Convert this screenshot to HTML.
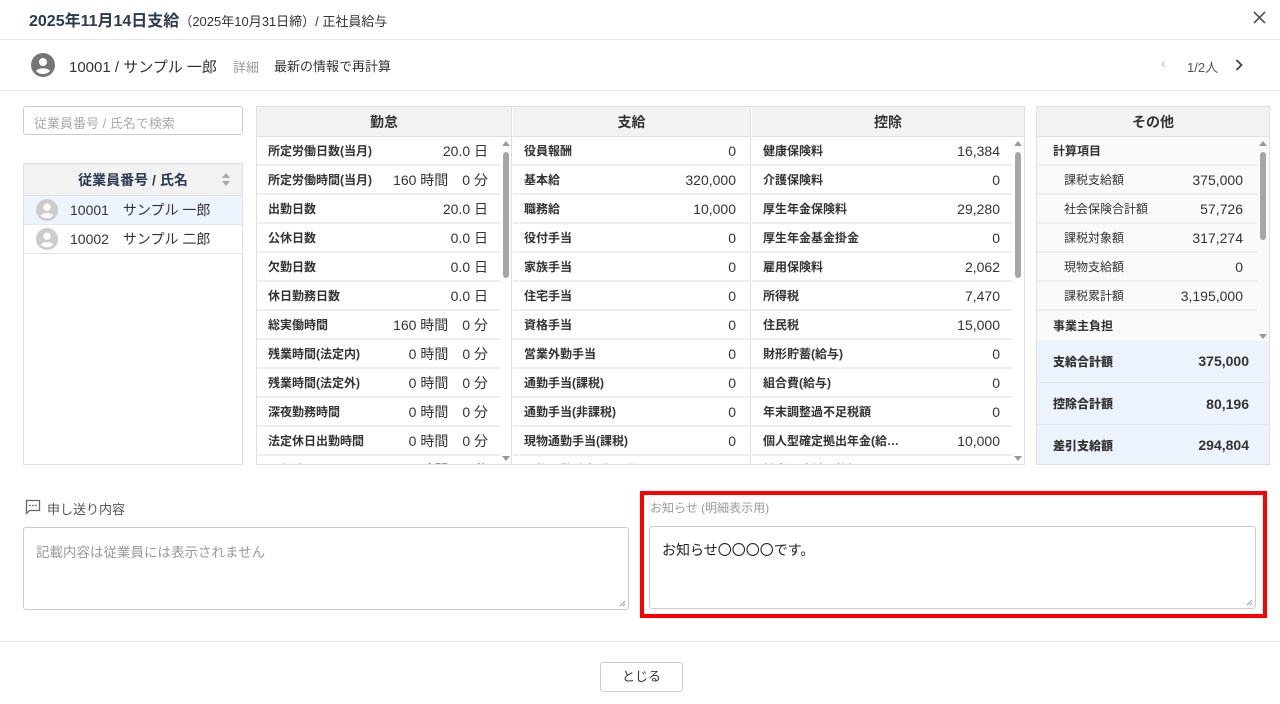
<!DOCTYPE html>
<html><head><meta charset="utf-8"><style>
*{box-sizing:border-box;margin:0;padding:0}
body{width:1280px;height:704px;overflow:hidden;background:#fff;font-family:"Liberation Sans","Noto Sans CJK JP",sans-serif;color:#333;position:relative}
.a{position:absolute}
.hl{position:absolute;left:0;width:1280px;height:1px;background:#e6e6e6}
.col{position:absolute;overflow:hidden}
.hd{height:30px;background:#f2f2f2;border-bottom:1px solid #e0e0e0;text-align:center;font-size:14px;font-weight:bold;line-height:30px;color:#333}
.r{height:29px;border-bottom:2px solid #eeeeee;display:flex;align-items:center;justify-content:space-between;padding:0 12px 0 11px;font-size:12px}
.r b{font-weight:bold;color:#333;white-space:nowrap}
.r span{font-size:14px;color:#333;white-space:nowrap}
.sb{position:absolute;width:12px;background:#fff}
.sb .t{position:absolute;left:3px;width:6px;background:#a6a6a6;border-radius:3px}
.up,.dn{position:absolute;left:2px;width:0;height:0;border-left:4px solid transparent;border-right:4px solid transparent}
.up{border-bottom:5px solid #999}.dn{border-top:5px solid #999}
.o .r{background:#fafafa}
.sum{height:43px;background:#edf3fc;border-bottom:1px solid #dde6f2;display:flex;align-items:center;justify-content:space-between;padding:0 20px 0 16px;font-size:12px;font-weight:bold}
.sum span{font-size:14px}
.grip{position:absolute;right:2px;bottom:2px}
</style></head><body>
<div class="a" style="left:29px;top:7px;font-size:16px;font-weight:bold;color:#2b3a4f">2025年11月14日支給<span style="font-size:13px;font-weight:normal;color:#333">（2025年10月31日締）/ 正社員給与</span></div>
<svg class="a" style="left:1253px;top:11px" width="13" height="13" viewBox="0 0 13 13"><path d="M1 1L12 12M12 1L1 12" stroke="#555" stroke-width="1.6"/></svg>
<div class="hl" style="top:39px"></div>
<svg class="a" style="left:31px;top:53px" width="24" height="24" viewBox="0 0 24 24"><circle cx="12" cy="12" r="12" fill="#757575"/><circle cx="12" cy="9" r="4" fill="#fff"/><path d="M5 18c2-3.5 12-3.5 14 0c-2 2-4 3-7 3s-5-1-7-3z" fill="#fff"/></svg>
<div class="a" style="left:69px;top:56px;font-size:15px;color:#333">10001 / サンプル 一郎</div>
<div class="a" style="left:233px;top:57px;font-size:13px;color:#999">詳細</div>
<div class="a" style="left:274px;top:56px;font-size:13px;color:#333">最新の情報で再計算</div>
<div class="a" style="left:1161px;top:55px;font-size:14px;color:#bbb">‹</div>
<div class="a" style="left:1187px;top:57px;font-size:13px;color:#555">1/2人</div>
<svg class="a" style="left:1235px;top:59px" width="8" height="12" viewBox="0 0 8 12"><path d="M1.5 1l5 5-5 5" stroke="#444" stroke-width="1.8" fill="none"/></svg>
<div class="hl" style="top:90px"></div>

<div class="a" style="left:23px;top:106px;width:220px;height:29px;border:1px solid #ccc;border-radius:3px;font-size:13px;color:#aaa;padding:6px 10px">従業員番号 / 氏名で検索</div>
<div class="a" style="left:23px;top:163px;width:220px;height:302px;border:1px solid #e0e0e0">
 <div style="height:32px;background:#f2f2f2;border-bottom:1px solid #e0e0e0;text-align:center;line-height:32px;font-size:14px;font-weight:bold;color:#2b3a4f;position:relative">従業員番号 / 氏名<div class="up" style="left:198px;top:9px;border-bottom-color:#aaa"></div><div class="dn" style="left:198px;top:17px;border-top-color:#aaa"></div></div>
 <div style="height:29px;background:#edf4fd;border-bottom:1px solid #e5e5e5;display:flex;align-items:center;font-size:14px"><svg style="margin:0 12px 0 12px" width="22" height="22" viewBox="0 0 24 24"><circle cx="12" cy="12" r="12" fill="#ccc"/><circle cx="12" cy="9" r="4" fill="#fff"/><path d="M5 18c2-3.5 12-3.5 14 0c-2 2-4 3-7 3s-5-1-7-3z" fill="#fff"/></svg>10001　サンプル 一郎</div>
 <div style="height:29px;border-bottom:1px solid #e5e5e5;display:flex;align-items:center;font-size:14px"><svg style="margin:0 12px 0 12px" width="22" height="22" viewBox="0 0 24 24"><circle cx="12" cy="12" r="12" fill="#ccc"/><circle cx="12" cy="9" r="4" fill="#fff"/><path d="M5 18c2-3.5 12-3.5 14 0c-2 2-4 3-7 3s-5-1-7-3z" fill="#fff"/></svg>10002　サンプル 二郎</div>
</div>

<div class="a" style="left:256px;top:106px;width:769px;height:359px;border:1px solid #e0e0e0"></div>
<div class="col" style="left:257px;top:107px;width:255px;height:357px;border-right:1px solid #e0e0e0">
 <div class="hd">勤怠</div>
 <div style="width:243px">
 <div class="r"><b>所定労働日数(当月)</b><span>20.0 日</span></div>
 <div class="r"><b>所定労働時間(当月)</b><span>160 時間　0 分</span></div>
 <div class="r"><b>出勤日数</b><span>20.0 日</span></div>
 <div class="r"><b>公休日数</b><span>0.0 日</span></div>
 <div class="r"><b>欠勤日数</b><span>0.0 日</span></div>
 <div class="r"><b>休日勤務日数</b><span>0.0 日</span></div>
 <div class="r"><b>総実働時間</b><span>160 時間　0 分</span></div>
 <div class="r"><b>残業時間(法定内)</b><span>0 時間　0 分</span></div>
 <div class="r"><b>残業時間(法定外)</b><span>0 時間　0 分</span></div>
 <div class="r"><b>深夜勤務時間</b><span>0 時間　0 分</span></div>
 <div class="r"><b>法定休日出勤時間</b><span>0 時間　0 分</span></div>
 <div class="r"><b>遅刻時間</b><span>0 時間　0 分</span></div>
 </div>
 <div class="sb" style="left:243px;top:31px;height:326px"><div class="up" style="top:3px"></div><div class="t" style="top:14px;height:126px"></div><div class="dn" style="top:318px"></div></div>
</div>
<div class="col" style="left:513px;top:107px;width:238px;height:357px;border-right:1px solid #e0e0e0">
 <div class="hd">支給</div>
 <div class="r" style="padding-right:14px"><b>役員報酬</b><span>0</span></div>
 <div class="r" style="padding-right:14px"><b>基本給</b><span>320,000</span></div>
 <div class="r" style="padding-right:14px"><b>職務給</b><span>10,000</span></div>
 <div class="r" style="padding-right:14px"><b>役付手当</b><span>0</span></div>
 <div class="r" style="padding-right:14px"><b>家族手当</b><span>0</span></div>
 <div class="r" style="padding-right:14px"><b>住宅手当</b><span>0</span></div>
 <div class="r" style="padding-right:14px"><b>資格手当</b><span>0</span></div>
 <div class="r" style="padding-right:14px"><b>営業外勤手当</b><span>0</span></div>
 <div class="r" style="padding-right:14px"><b>通勤手当(課税)</b><span>0</span></div>
 <div class="r" style="padding-right:14px"><b>通勤手当(非課税)</b><span>0</span></div>
 <div class="r" style="padding-right:14px"><b>現物通勤手当(課税)</b><span>0</span></div>
 <div class="r" style="padding-right:14px"><b>現物通勤手当(非課税)</b><span>0</span></div>
</div>
<div class="col" style="left:752px;top:107px;width:272px;height:357px">
 <div class="hd">控除</div>
 <div style="width:260px">
 <div class="r"><b>健康保険料</b><span>16,384</span></div>
 <div class="r"><b>介護保険料</b><span>0</span></div>
 <div class="r"><b>厚生年金保険料</b><span>29,280</span></div>
 <div class="r"><b>厚生年金基金掛金</b><span>0</span></div>
 <div class="r"><b>雇用保険料</b><span>2,062</span></div>
 <div class="r"><b>所得税</b><span>7,470</span></div>
 <div class="r"><b>住民税</b><span>15,000</span></div>
 <div class="r"><b>財形貯蓄(給与)</b><span>0</span></div>
 <div class="r"><b>組合費(給与)</b><span>0</span></div>
 <div class="r"><b>年末調整過不足税額</b><span>0</span></div>
 <div class="r"><b>個人型確定拠出年金(給…</b><span>10,000</span></div>
 <div class="r"><b>社会保険料調整額</b><span>0</span></div>
 </div>
 <div class="sb" style="left:260px;top:31px;height:326px"><div class="up" style="top:3px"></div><div class="t" style="top:14px;height:126px"></div><div class="dn" style="top:318px"></div></div>
</div>

<div class="col o" style="left:1036px;top:106px;width:234px;height:359px;border:1px solid #e0e0e0">
 <div class="hd">その他</div>
 <div style="width:220px;height:203px;overflow:hidden">
 <div class="r"><b style="padding-left:5px">計算項目</b><span></span></div>
 <div class="r" style="padding-left:27px;padding-right:14px"><b style="font-weight:normal">課税支給額</b><span>375,000</span></div>
 <div class="r" style="padding-left:27px;padding-right:14px"><b style="font-weight:normal">社会保険合計額</b><span>57,726</span></div>
 <div class="r" style="padding-left:27px;padding-right:14px"><b style="font-weight:normal">課税対象額</b><span>317,274</span></div>
 <div class="r" style="padding-left:27px;padding-right:14px"><b style="font-weight:normal">現物支給額</b><span>0</span></div>
 <div class="r" style="padding-left:27px;padding-right:14px"><b style="font-weight:normal">課税累計額</b><span>3,195,000</span></div>
 <div class="r" style="border:none"><b style="padding-left:5px">事業主負担</b><span></span></div>
 </div>
 <div class="sb" style="left:220px;top:31px;height:203px;background:#fafafa"><div class="up" style="top:3px"></div><div class="t" style="top:14px;height:88px"></div><div class="dn" style="top:196px"></div></div>
 <div class="sum"><b>支給合計額</b><span>375,000</span></div>
 <div class="sum" style="height:42px"><b>控除合計額</b><span>80,196</span></div>
 <div class="sum" style="border:none;height:40px"><b>差引支給額</b><span>294,804</span></div>
</div>

<svg class="a" style="left:25px;top:499px" width="16" height="16" viewBox="0 0 16 16"><path d="M1.5 1.5h13v10h-10l-3 3z" fill="none" stroke="#666" stroke-width="1.3"/><circle cx="5" cy="6.5" r=".9" fill="#666"/><circle cx="8" cy="6.5" r=".9" fill="#666"/><circle cx="11" cy="6.5" r=".9" fill="#666"/></svg>
<div class="a" style="left:47px;top:499px;font-size:13px;color:#555">申し送り内容</div>
<div class="a" style="left:23px;top:527px;width:606px;height:83px;border:1px solid #ccc;border-radius:3px;font-size:13.5px;color:#999;padding:13px 12px">記載内容は従業員には表示されません<svg class="grip" width="7" height="7" viewBox="0 0 7 7"><path d="M6 1L1 6M6 4L4 6" stroke="#999"/></svg></div>

<div class="a" style="left:640px;top:491px;width:627px;height:127px;border:4px solid #f00"></div>
<div class="a" style="left:650px;top:499px;font-size:12px;color:#999">お知らせ (明細表示用)</div>
<div class="a" style="left:649px;top:526px;width:607px;height:83px;border:1px solid #ccc;border-radius:3px;font-size:14px;color:#222;padding:13px 12px">お知らせ〇〇〇〇です。<svg class="grip" width="7" height="7" viewBox="0 0 7 7"><path d="M6 1L1 6M6 4L4 6" stroke="#999"/></svg></div>

<div class="hl" style="top:641px"></div>
<div class="a" style="left:600px;top:662px;width:83px;height:30px;border:1px solid #ccc;border-radius:3px;text-align:center;line-height:28px;font-size:13px;color:#333">とじる</div>
</body></html>
